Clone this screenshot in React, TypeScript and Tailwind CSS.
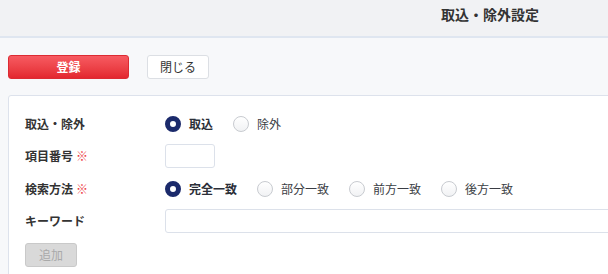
import React, { useState } from 'react';

const font = { fontFamily: '"Noto Sans CJK JP", "Noto Sans", sans-serif' };

interface RadioProps {
  label: string;
  checked: boolean;
  onSelect: () => void;
}

const Radio: React.FC<RadioProps> = ({ label, checked, onSelect }) => (
  <label className="flex items-center gap-2 cursor-pointer" onClick={onSelect}>
    {checked ? (
      <span className="w-4 h-4 rounded-full border-[5px] border-[#1b2a6b] bg-white" />
    ) : (
      <span className="w-4 h-4 rounded-full border border-[#c8cbd0] bg-gradient-to-b from-white to-[#f1f2f4]" />
    )}
    <span className={checked ? 'text-[12px] font-bold text-[#2b2f38]' : 'text-[12px] text-[#3a3d44]'}>{label}</span>
  </label>
);

const Required = () => <span className="ml-[3px] text-[#ee3b44] font-bold">※</span>;

const Row: React.FC<{ label: React.ReactNode; children: React.ReactNode; tall?: boolean }> = ({ label, children, tall }) => (
  <div className={tall ? 'flex items-center h-[25px]' : 'flex items-center h-6'}>
    <div className="w-[140px] text-[12px] font-bold text-[#333]">{label}</div>
    <div className="flex-1 flex items-center gap-5">{children}</div>
  </div>
);

export default function App() {
  const [mode, setMode] = useState('in');
  const [match, setMatch] = useState('exact');

  const matches = [
    { id: 'exact', label: '完全一致' },
    { id: 'part', label: '部分一致' },
    { id: 'front', label: '前方一致' },
    { id: 'back', label: '後方一致' },
  ];

  return (
    <div className="w-screen h-screen overflow-hidden bg-[#f7f8fa]" style={font}>
      <div className="w-[980px]">
        {/* Header */}
        <div className="h-[38px] bg-[#f1f2f4] border-b-2 border-[#dfe6f0] flex justify-center pt-[4px]">
          <h1 className="text-[14px] leading-5 font-bold text-[#333]">取込・除外設定</h1>
        </div>

        {/* Actions */}
        <div className="flex gap-[18px] px-2 pt-[17px]">
          <button className="w-[121px] h-6 rounded-[3px] border border-[#dc2b33] bg-gradient-to-b from-[#f75a61] to-[#e3262f] text-white text-[12px] font-bold">
            登録
          </button>
          <button className="w-[62px] h-6 rounded-[3px] border border-[#dcdfe4] bg-white text-[#333] text-[12px]">
            閉じる
          </button>
        </div>

        {/* Form panel */}
        <div className="mx-2 mt-4 bg-white border border-[#dde2ec] rounded-[3px] p-4 flex flex-col gap-2">
          <Row label="取込・除外">
            <Radio label="取込" checked={mode === 'in'} onSelect={() => setMode('in')} />
            <Radio label="除外" checked={mode === 'out'} onSelect={() => setMode('out')} />
          </Row>
          <Row label={<>項目番号<Required /></>}>
            <input className="w-[50px] h-6 rounded-[3px] border border-[#dce1ea] bg-white outline-none" />
          </Row>
          <Row label={<>検索方法<Required /></>} tall>
            {matches.map(m => (
              <Radio key={m.id} label={m.label} checked={match === m.id} onSelect={() => setMatch(m.id)} />
            ))}
          </Row>
          <Row label="キーワード">
            <input className="w-full h-6 rounded-[3px] border border-[#dce1ea] bg-white outline-none" />
          </Row>
          <div>
            <button className="w-[52px] h-6 rounded-[3px] border border-[#c9c9c9] bg-[#d9d9d9] text-[#a9a9a9] text-[12px]">
              追加
            </button>
          </div>
        </div>
      </div>
    </div>
  );
}
